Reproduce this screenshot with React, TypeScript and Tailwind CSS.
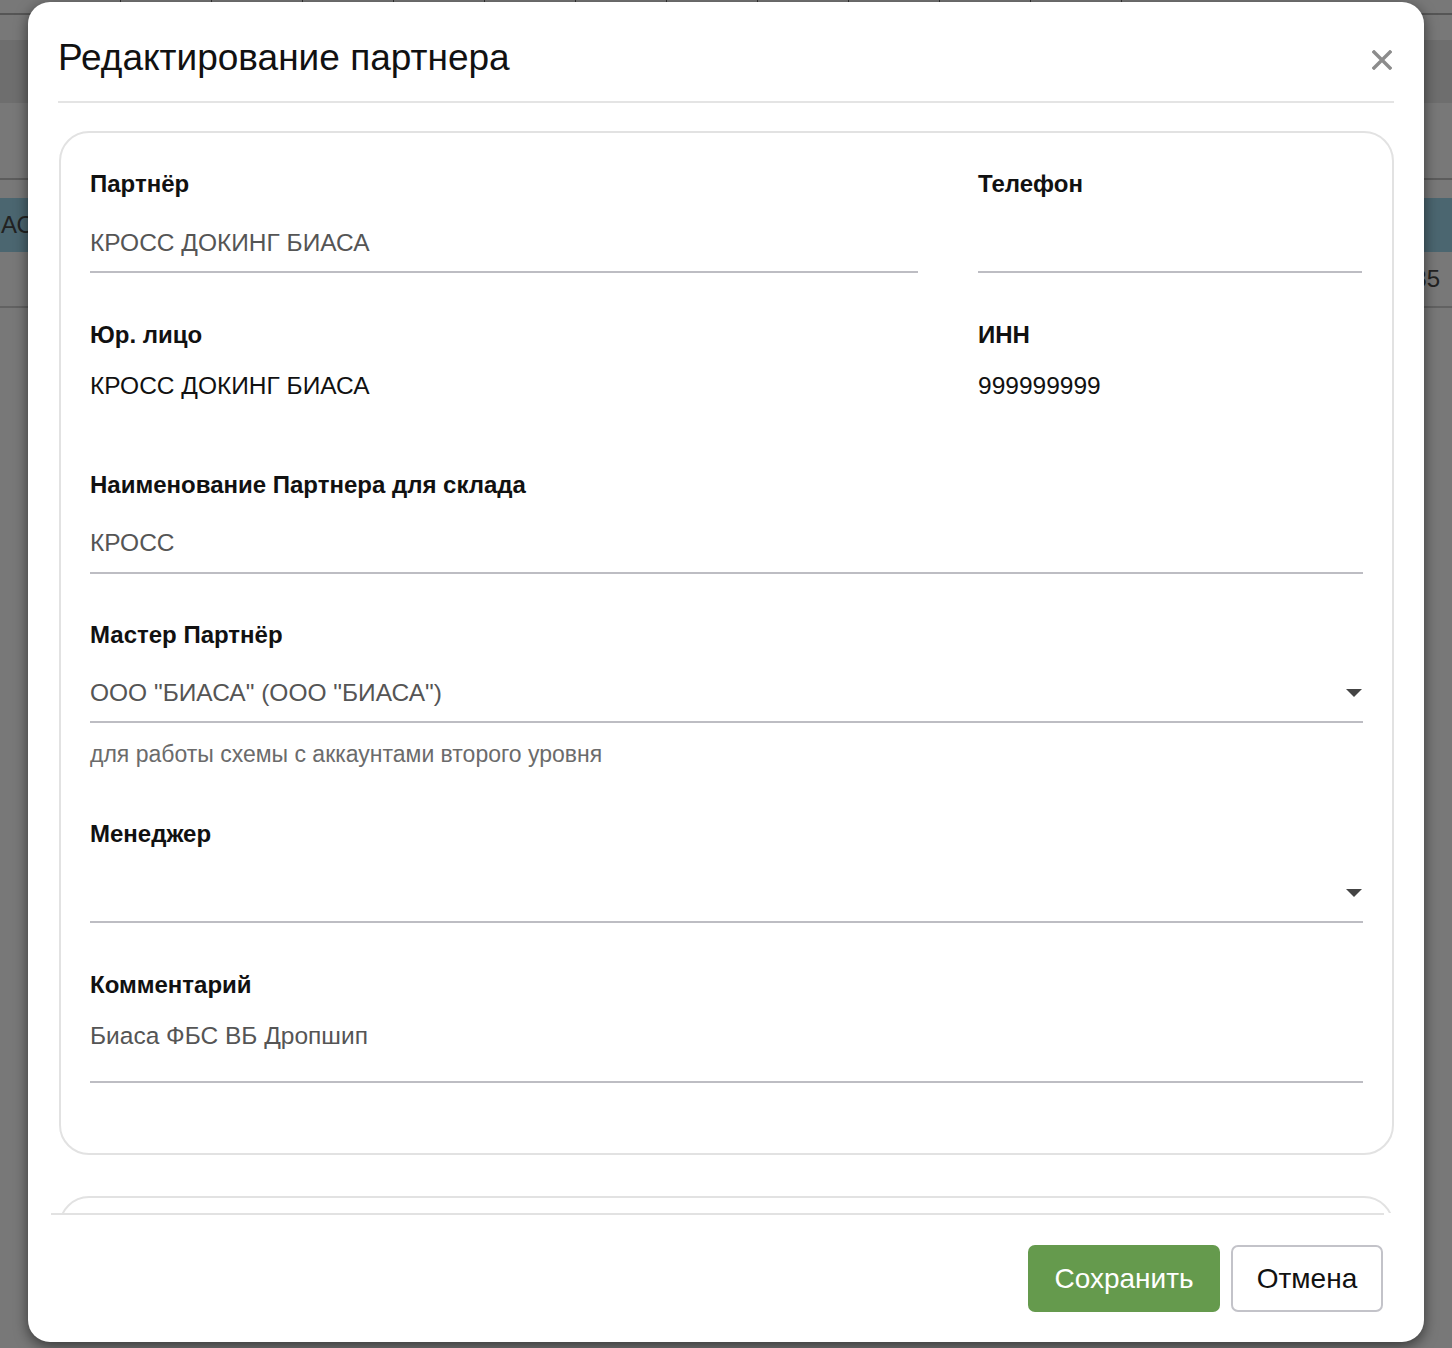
import React from 'react';

const font = "font-['Liberation_Sans',Arial,sans-serif]";

function Caret() {
  return (
    <svg width="16" height="8" viewBox="0 0 16 8" className="shrink-0">
      <path d="M0 0 H16 L8 8 Z" fill="#444" />
    </svg>
  );
}

function Label({ children }: { children: React.ReactNode }) {
  return <div className="text-[24px] leading-[28px] font-bold text-[#111]">{children}</div>;
}

function Underline() {
  return <div className="h-[2px] bg-[#bdbdc3]" />;
}

function Backdrop() {
  return (
    <div className="flex flex-col w-full h-full bg-[#787878]">
      <div className="h-[15px] border-b-2 border-[#555] flex gap-[90px] pl-[120px]">
        {[0, 1, 2, 3, 4, 5, 6, 7, 8, 9, 10, 11].map((i) => (
          <div key={i} className="w-px h-[6px] bg-[#333]" />
        ))}
      </div>
      <div className="h-[25px]" />
      <div className="h-[63px] bg-[#6e6e6e]" />
      <div className="h-[77px] border-b-2 border-[#5c5c5c]" />
      <div className="h-[18px]" />
      <div className="h-[54px] bg-[#4b6670] flex items-center text-[24px] text-[#222]">
        <span className="pl-px">АС</span>
      </div>
      <div className="h-[56px] border-b-2 border-[#626262] flex items-center justify-end pr-[12px] text-[24px] text-[#222]">
        35
      </div>
    </div>
  );
}

export default function App() {
  return (
    <div className={`relative w-[1452px] h-[1348px] overflow-hidden ${font}`}>
      <Backdrop />

      {/* Modal */}
      <div className="absolute left-[28px] top-[2px] w-[1396px] h-[1340px] bg-white rounded-[22px] shadow-[0_4px_14px_rgba(0,0,0,0.55)] flex flex-col">
        {/* Header */}
        <div className="mx-[30px] h-[101px] border-b-2 border-[#e4e4e4] flex items-start justify-between pt-[36px] shrink-0">
          <h2 className="text-[37px] leading-[40px] font-normal text-[#111]">Редактирование партнера</h2>
          <button className="mt-[12px] mr-[2px]">
            <svg width="20" height="20" viewBox="0 0 20 20">
              <path d="M2 2 L18 18 M18 2 L2 18" stroke="#8c8c8c" strokeWidth="3.4" strokeLinecap="square" />
            </svg>
          </button>
        </div>

        {/* Body */}
        <div className="h-[1110px] overflow-hidden shrink-0 pt-[28px]">
          <div className="ml-[31px] mr-[30px] border-2 border-[#e2e2e2] rounded-[30px] h-[1024px] px-[29px] pt-[37px]">
            {/* Row 1 */}
            <div className="flex gap-[60px]">
              <div className="w-[828px]">
                <Label>Партнёр</Label>
                <div className="mt-[31px] text-[24.5px] leading-[28px] text-[#555] pb-[14px]">КРОСС ДОКИНГ БИАСА</div>
                <Underline />
              </div>
              <div className="w-[384px]">
                <Label>Телефон</Label>
                <div className="mt-[31px] h-[28px] pb-[14px] box-content" />
                <Underline />
              </div>
            </div>

            {/* Row 2 */}
            <div className="flex gap-[60px] mt-[48px]">
              <div className="w-[828px]">
                <Label>Юр. лицо</Label>
                <div className="mt-[23px] text-[24.5px] leading-[28px] text-[#111]">КРОСС ДОКИНГ БИАСА</div>
              </div>
              <div className="w-[384px]">
                <Label>ИНН</Label>
                <div className="mt-[23px] text-[24.5px] leading-[28px] text-[#111]">999999999</div>
              </div>
            </div>

            {/* Warehouse name */}
            <div className="mt-[71px]">
              <Label>Наименование Партнера для склада</Label>
              <div className="mt-[30px] text-[24.5px] leading-[28px] text-[#555] pb-[15px]">КРОСС</div>
              <Underline />
            </div>

            {/* Master partner */}
            <div className="mt-[47px]">
              <Label>Мастер Партнёр</Label>
              <div className="mt-[30px] flex items-center justify-between pb-[14px] pr-px">
                <span className="text-[24.5px] leading-[28px] text-[#555]">ООО "БИАСА" (ООО "БИАСА")</span>
                <Caret />
              </div>
              <Underline />
              <div className="mt-[17px] text-[23px] leading-[28px] text-[#6b6b6b]">для работы схемы с аккаунтами второго уровня</div>
            </div>

            {/* Manager */}
            <div className="mt-[52px]">
              <Label>Менеджер</Label>
              <div className="mt-[31px] h-[28px] flex items-center justify-end pb-[14px] box-content pr-px">
                <Caret />
              </div>
              <Underline />
            </div>

            {/* Comment */}
            <div className="mt-[48px]">
              <Label>Комментарий</Label>
              <div className="mt-[23px] text-[24.5px] leading-[28px] text-[#555] h-[28px] pb-[31px] box-content">Биаса ФБС ВБ Дропшип</div>
              <Underline />
            </div>
          </div>

          {/* Second card (clipped) */}
          <div className="mt-[41px] ml-[31px] mr-[30px] border-2 border-[#e2e2e2] rounded-[30px] h-[200px]" />
        </div>

        <div className="ml-[23px] mr-[40px] h-[2px] bg-[#e2e2e2] shrink-0" />

        {/* Footer */}
        <div className="flex justify-end gap-[11px] pr-[41px] pt-[30px]">
          <button className="w-[192px] h-[67px] rounded-[7px] bg-[#659a4d] text-white text-[28px]">Сохранить</button>
          <button className="w-[152px] h-[67px] rounded-[7px] border-2 border-[#c3c3c9] bg-white text-[#111] text-[28px]">Отмена</button>
        </div>
      </div>
    </div>
  );
}
